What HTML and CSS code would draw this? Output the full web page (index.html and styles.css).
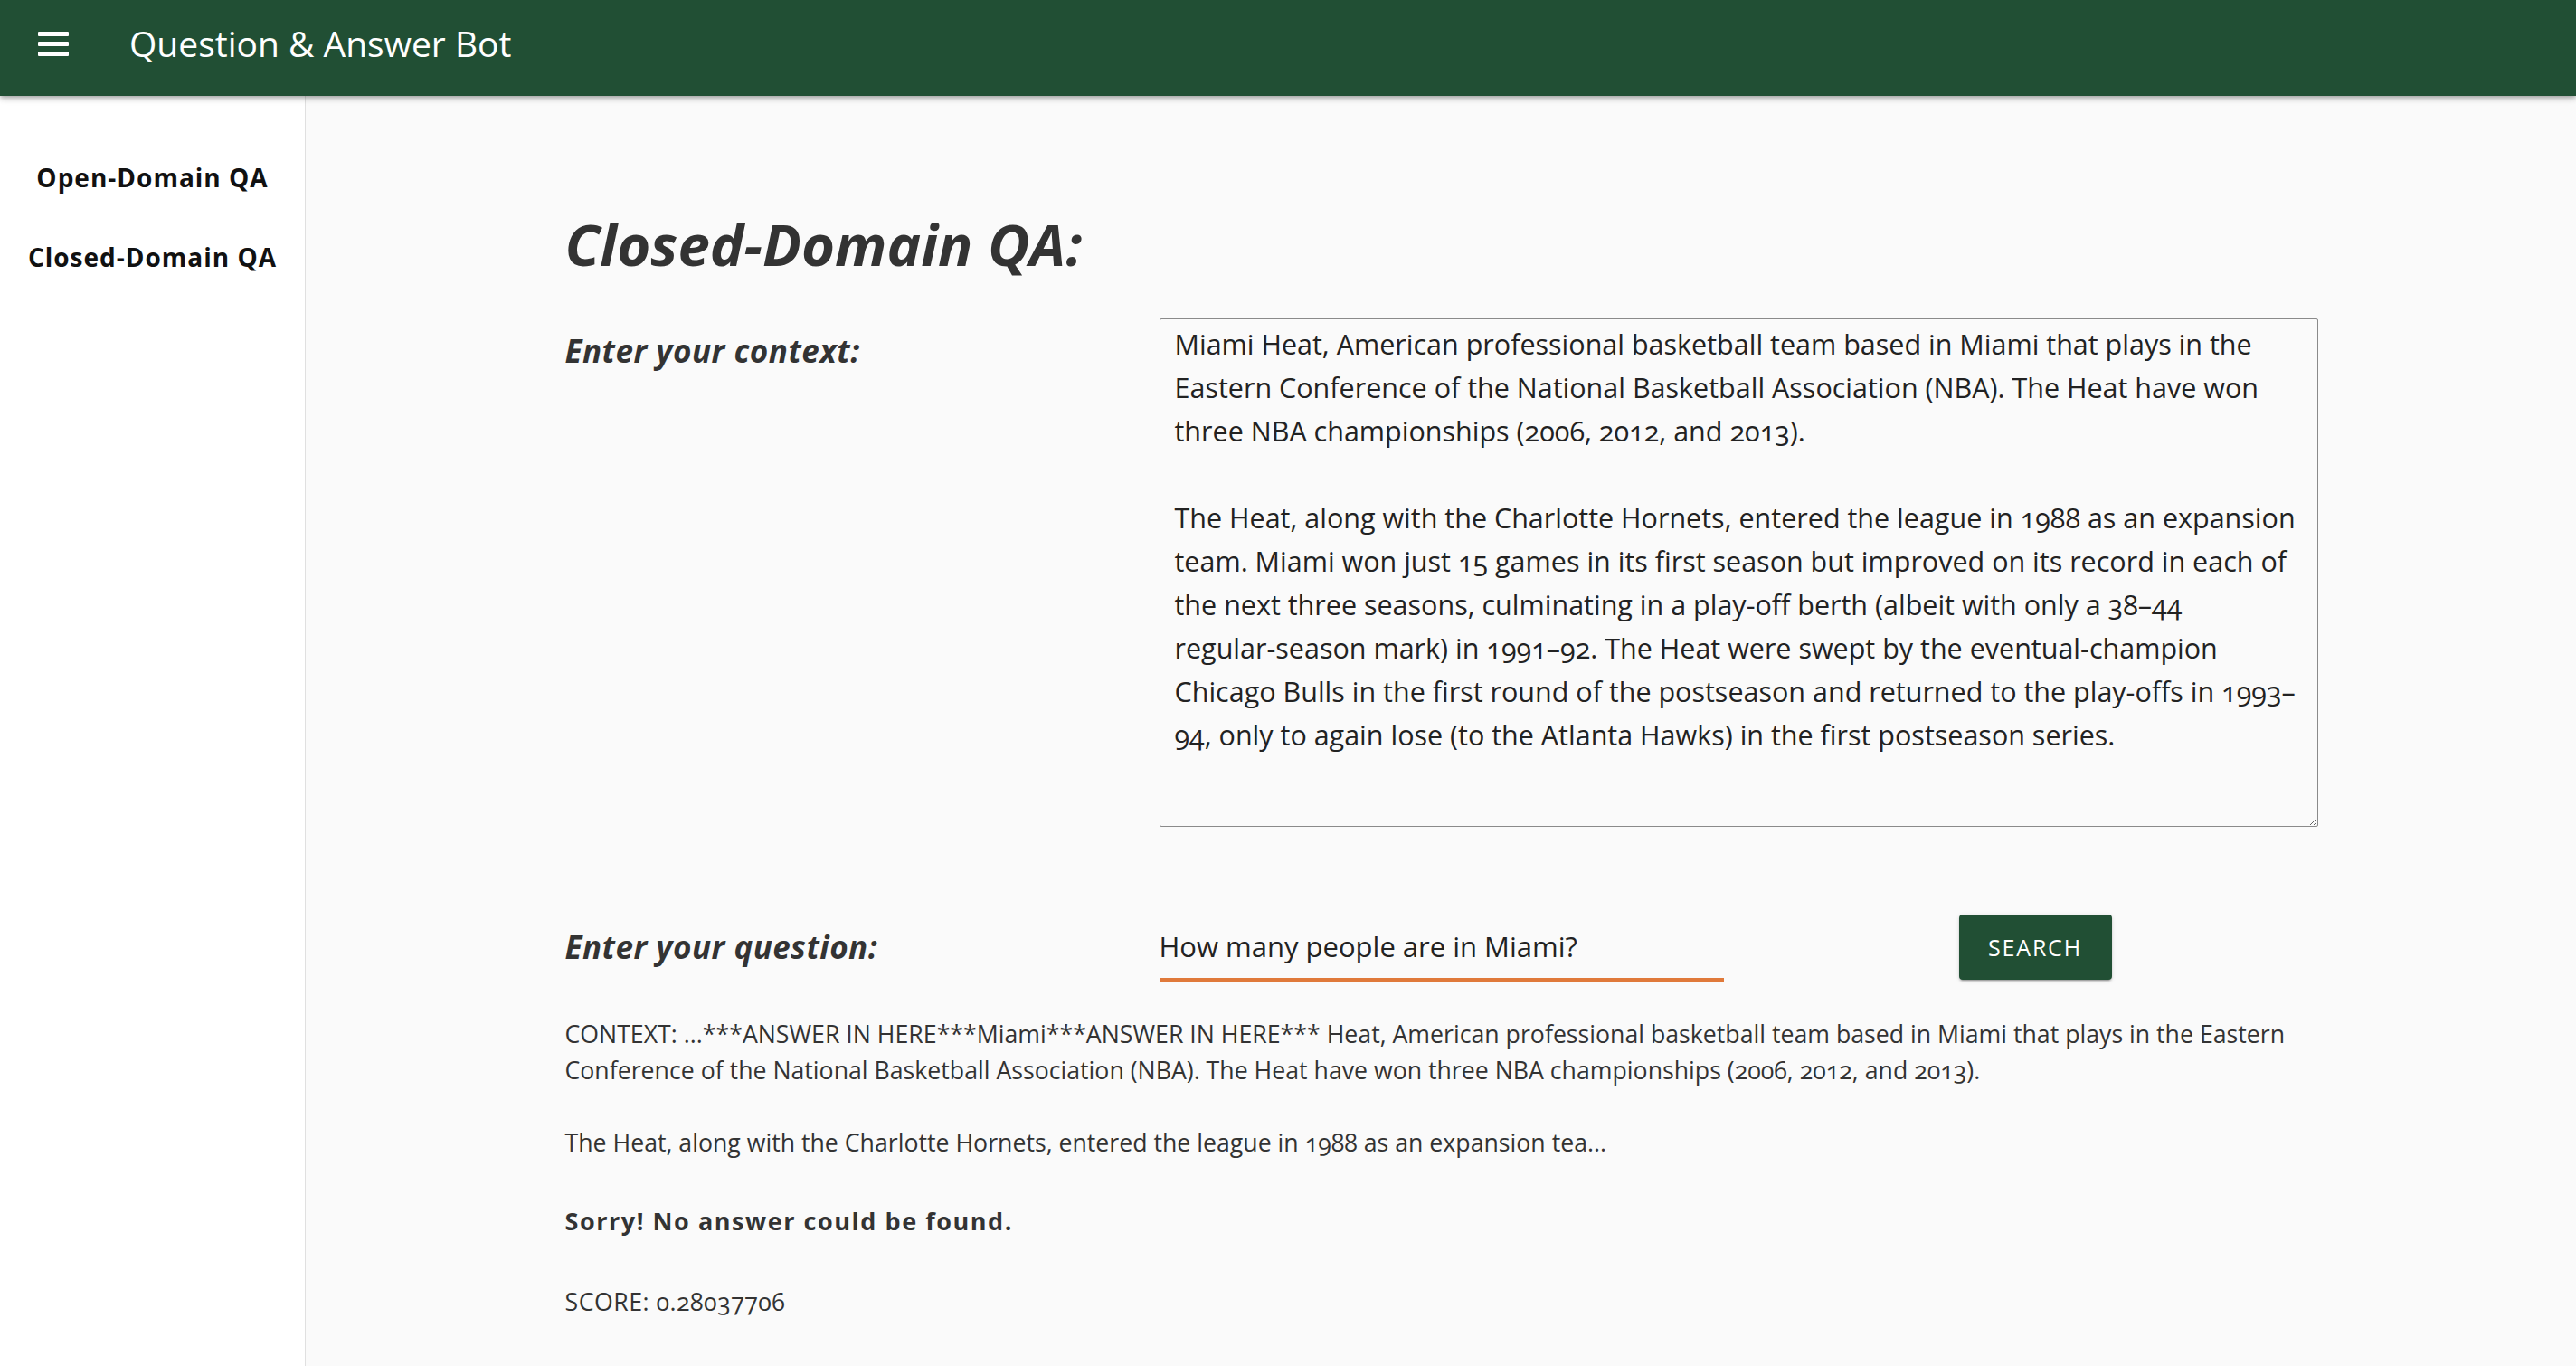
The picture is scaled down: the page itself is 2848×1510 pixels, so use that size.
FILE: index.html
```html
<!DOCTYPE html>
<html lang="en">
<head>
<meta charset="utf-8">
<title>Question &amp; Answer Bot</title>
<link rel="stylesheet" href="styles.css">
</head>
<body>
<header class="toolbar">
  <button class="menu-btn" aria-label="Menu">
    <svg width="34" height="27" viewBox="0 0 34 27" aria-hidden="true">
      <rect x="0" y="0" width="34" height="5" rx="1" fill="#fff"/>
      <rect x="0" y="11" width="34" height="5" rx="1" fill="#fff"/>
      <rect x="0" y="22" width="34" height="5" rx="1" fill="#fff"/>
    </svg>
  </button>
  <span class="app-title">Question &amp; Answer Bot</span>
</header>
<div class="layout">
  <nav class="sidenav">
    <a class="nav-item" href="#">Open-Domain QA</a>
    <a class="nav-item" href="#">Closed-Domain QA</a>
  </nav>
  <main class="main">
    <div class="container">
      <h1 class="page-title">Closed-Domain QA:</h1>
      <div class="form-row context-row">
        <label class="field-label" for="ctx">Enter your context:</label>
        <textarea id="ctx" class="context-box" wrap="off" spellcheck="false">Miami Heat, American professional basketball team based in Miami that plays in the
Eastern Conference of the National Basketball Association (NBA). The Heat have won
three NBA championships (2006, 2012, and 2013).

The Heat, along with the Charlotte Hornets, entered the league in 1988 as an expansion
team. Miami won just 15 games in its first season but improved on its record in each of
the next three seasons, culminating in a play-off berth (albeit with only a 38–44
regular-season mark) in 1991–92. The Heat were swept by the eventual-champion
Chicago Bulls in the first round of the postseason and returned to the play-offs in 1993–
94, only to again lose (to the Atlanta Hawks) in the first postseason series.</textarea>
      </div>
      <div class="form-row question-row">
        <label class="field-label q-label" for="q">Enter your question:</label>
        <input id="q" class="question-input" type="text" value="How many people are in Miami?">
        <button class="search-btn">SEARCH</button>
      </div>
      <p class="result-context">CONTEXT: ...***ANSWER IN HERE***Miami***ANSWER IN HERE*** Heat, American professional basketball team based in Miami that plays in the Eastern
Conference of the National Basketball Association (NBA). The Heat have won three NBA championships (2006, 2012, and 2013).

The Heat, along with the Charlotte Hornets, entered the league in 1988 as an expansion tea...</p>
      <p class="result-answer">Sorry! No answer could be found.</p>
      <p class="result-score">SCORE: 0.28037706</p>
    </div>
  </main>
</div>
</body>
</html>
```

FILE: styles.css
```css
* { box-sizing: border-box; }

html, body {
  margin: 0;
  padding: 0;
}

body {
  font-family: "Open Sans", Lato, sans-serif;
  font-variant-numeric: oldstyle-nums;
  background: #fafafa;
  color: #333;
  min-height: 100vh;
  overflow: hidden;
}

.toolbar {
  position: relative;
  z-index: 2;
  height: 106px;
  padding: 0 0 9px 42px;
  background: #214f34;
  color: #fff;
  display: flex;
  align-items: center;
  box-shadow: 0 2px 4px -1px rgba(0,0,0,.2), 0 4px 5px 0 rgba(0,0,0,.14), 0 1px 10px 0 rgba(0,0,0,.12);
}

.menu-btn {
  border: 0;
  background: none;
  padding: 0;
  margin: 0;
  width: 34px;
  height: 27px;
  display: flex;
}

.app-title {
  margin-left: 67px;
  font-size: 39px;
  font-weight: 400;
  line-height: 1.2;
}

.layout {
  display: flex;
  min-height: calc(100vh - 106px);
}

.sidenav {
  width: 338px;
  flex: none;
  background: #fff;
  border-right: 1px solid #e0e0e0;
  padding-top: 46px;
  display: flex;
  flex-direction: column;
  align-items: center;
}

.nav-item {
  display: block;
  font-size: 28px;
  font-weight: 700;
  line-height: 88px;
  color: #111;
  text-decoration: none;
  letter-spacing: 1px;
}

.main {
  flex: 1;
  padding-top: 126px;
}

.container {
  width: 1937px;
  margin: 0 auto;
}

.page-title {
  margin: 0;
  font-size: 63.5px;
  font-weight: 700;
  font-style: italic;
  line-height: 1.2;
  color: #333;
}

.form-row {
  display: flex;
  align-items: flex-start;
}

.context-row {
  margin-top: 44px;
}

.field-label {
  width: 657px;
  flex: none;
  font-size: 35px;
  font-weight: 700;
  font-style: italic;
  line-height: 1.2;
  letter-spacing: 0.5px;
  color: #333;
  margin-top: 15px;
}

.context-box {
  width: 1281px;
  height: 562px;
  flex: none;
  margin: 0;
  padding: 3px 16px;
  border: 1px solid #8a8a8a;
  border-radius: 2px;
  background: #fafafa;
  color: #222;
  font-family: "Open Sans", Lato, sans-serif;
  font-variant-numeric: oldstyle-nums;
  font-size: 30.5px;
  line-height: 48px;
  white-space: pre;
  overflow: hidden;
  resize: both;
  outline: none;
}

.question-row {
  margin-top: 97px;
}

.q-label {
  margin-top: 15px;
}

.question-input {
  width: 624px;
  height: 74px;
  flex: none;
  margin: 0;
  padding: 0;
  border: 0;
  border-bottom: 4px solid #e0793a;
  background: transparent;
  color: #222;
  font-family: "Open Sans", Lato, sans-serif;
  font-size: 31px;
  outline: none;
}

.search-btn {
  margin-left: 260px;
  width: 169px;
  height: 72px;
  flex: none;
  border: 0;
  border-radius: 4px;
  background: #214f34;
  color: #fff;
  font-family: "Open Sans", Lato, sans-serif;
  font-size: 25px;
  font-weight: 500;
  letter-spacing: 1.8px;
  box-shadow: 0 3px 1px -2px rgba(0,0,0,.2), 0 2px 2px 0 rgba(0,0,0,.14), 0 1px 5px 0 rgba(0,0,0,.12);
}

.result-context {
  margin: 38px 0 0;
  font-size: 26.7px;
  line-height: 40px;
  white-space: pre;
  color: #333;
}

.result-answer {
  margin: 47px 0 0;
  font-size: 27px;
  font-weight: 700;
  line-height: 40px;
  letter-spacing: 1.55px;
  color: #333;
}

.result-score {
  margin: 49px 0 0;
  font-size: 26.7px;
  line-height: 40px;
  letter-spacing: 0.5px;
  color: #333;
}
```
